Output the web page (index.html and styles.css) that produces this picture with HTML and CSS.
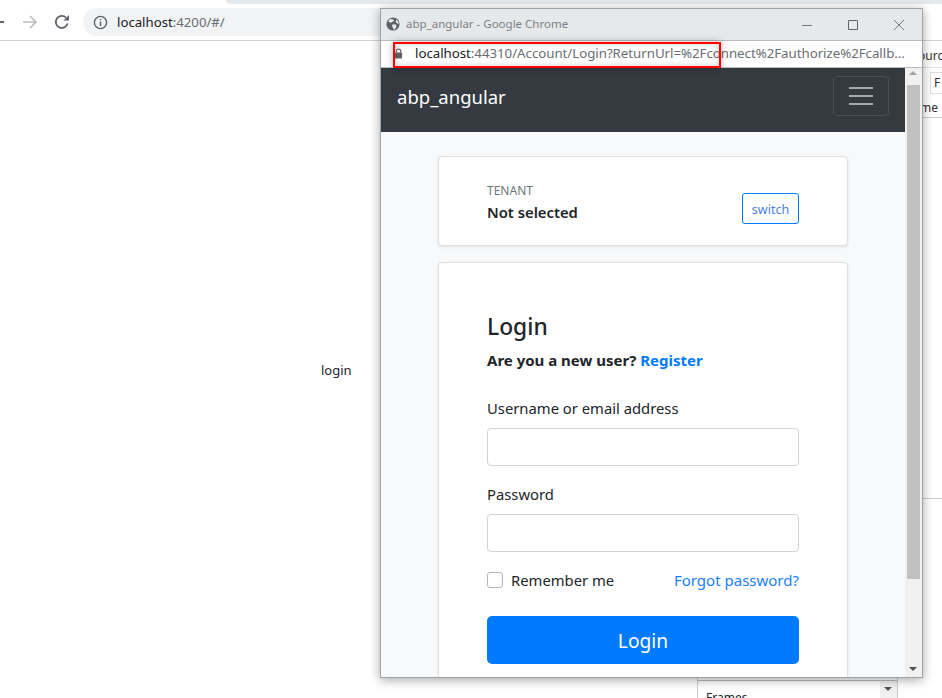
FILE: index.html
```html
<!DOCTYPE html>
<html lang="en">
<head>
<meta charset="utf-8">
<title>abp_angular</title>
<link rel="stylesheet" href="styles.css">
</head>
<body>
<div class="desktop">
  <div class="tabstrip"><div class="tab-edge"></div></div>
  <header class="toolbar">
    <span class="back-stub"></span>
    <svg class="tool-icon forward" viewBox="0 0 16 16" width="16" height="16"><path d="M1 8h13M8 2l6 6-6 6" fill="none" stroke="#bdbdbd" stroke-width="1.7"/></svg>
    <svg class="tool-icon reload" viewBox="0 0 16 16" width="16" height="16"><path d="M13.6 9.5A6 6 0 1 1 12 3.6" fill="none" stroke="#5f6368" stroke-width="1.8"/><path d="M15 1v5.6H9.4z" fill="#5f6368"/></svg>
    <div class="omnibox">
      <svg class="info" viewBox="0 0 16 16" width="15" height="15"><circle cx="8" cy="8" r="6.5" fill="none" stroke="#5f6368" stroke-width="1.5"/><path d="M8 7v4.6M8 4.2v1.5" stroke="#5f6368" stroke-width="1.6"/></svg>
      <span class="host">localhost</span><span class="path">:4200/#/</span>
    </div>
  </header>
  <main class="app-page"><span class="login-link">login</span></main>

  <aside class="devtools">
    <span class="dt-rule-top"></span>
    <span class="dt-source">ource</span>
    <span class="dt-filter">F</span>
    <span class="dt-name">me</span>
    <span class="dt-rule"></span>
  </aside>
  <aside class="frames">
    <span class="frames-label">Frames</span>
    <span class="frames-arrow"></span>
  </aside>

  <section class="popup">
    <div class="popup-title">
      <svg class="globe" viewBox="0 0 16 16" width="14" height="14"><circle cx="8" cy="8" r="7.5" fill="#5f6368"/><path d="M5 2c2 1 4 .5 4 2S7 5 6.500 6 4 6 3 5.500 3.500 2.800 5 2zM8 8.500c2-.8 4 .3 4 1.800s-2 4-3 4-.5-2-1.500-3S6.500 9 8 8.500zM12 3c1.500 1 2.500 3 2.500 5l-2-1-1.500-2z" fill="#e6e9ec"/></svg>
      <span class="popup-name">abp_angular - Google Chrome</span>
      <div class="window-controls">
        <svg viewBox="0 0 12 12" width="12" height="12"><path d="M1 6.500h10" stroke="#777" stroke-width="1"/></svg>
        <svg viewBox="0 0 12 12" width="12" height="12"><path d="M1.500 1.500h9v9h-9z" fill="none" stroke="#666" stroke-width="1"/></svg>
        <svg viewBox="0 0 12 12" width="12" height="12"><path d="M1 1l10 10M11 1L1 11" stroke="#777" stroke-width="1"/></svg>
      </div>
    </div>
    <div class="popup-address">
      <svg class="lock" viewBox="0 0 10 12" width="9" height="11"><path d="M2.500 5V3.500a2.500 2.500 0 0 1 5 0V5" fill="none" stroke="#5f6368" stroke-width="1.300"/><rect x="1" y="5" width="8" height="6.500" rx=".7" fill="#5f6368"/></svg>
      <span class="addr-text"><span class="host">localhost</span><span class="path">:44310/Account/Login?ReturnUrl=%2Fconnect%2Fauthorize%2Fcallb...</span></span>
      <span class="highlight"></span>
    </div>
    <div class="popup-body">
      <div class="viewport">
        <nav class="navbar">
          <span class="brand">abp_angular</span>
          <span class="toggler"><i></i><i></i><i></i></span>
        </nav>
        <div class="content">
          <div class="card tenant-card">
            <div>
              <div class="tenant-label">TENANT</div>
              <div class="tenant-value">Not selected</div>
            </div>
            <a class="switch-btn">switch</a>
          </div>
          <div class="card login-card">
            <h1>Login</h1>
            <p class="new-user"><strong>Are you a new user?</strong> <a>Register</a></p>
            <label class="field-label">Username or email address</label>
            <div class="input"></div>
            <label class="field-label">Password</label>
            <div class="input"></div>
            <div class="form-row">
              <span class="remember"><span class="checkbox"></span>Remember me</span>
              <a class="forgot">Forgot password?</a>
            </div>
            <div class="login-btn">Login</div>
          </div>
        </div>
      </div>
      <div class="scrollbar">
        <span class="arrow up"></span>
        <span class="track"><span class="thumb"></span></span>
        <span class="arrow down"></span>
      </div>
    </div>
  </section>
</div>
</body>
</html>
```
FILE: styles.css
```css
* { box-sizing: border-box; }
html, body { margin: 0; padding: 0; }
body {
  width: 942px;
  height: 698px;
  overflow: hidden;
  background: #fff;
  font-family: "Noto Sans", "Open Sans", sans-serif;
  color: #212529;
}
.desktop { position: relative; width: 942px; height: 698px; overflow: hidden; }

.tabstrip { height: 4px; position: relative; }
.tab-edge { margin-left: 226px; height: 4px; background: #e6e9ec; border-bottom-left-radius: 6px; }

.toolbar {
  height: 37px;
  border-bottom: 1px solid #d4d4d4;
  display: flex;
  align-items: center;
  position: relative;
}
.back-stub { width: 4px; height: 2px; background: #5f6368; margin-right: 18px; }
.tool-icon { display: block; }
.forward { margin-right: 16px; }
.reload { margin-right: 13px; }
.omnibox {
  width: 320px;
  height: 28px;
  border-radius: 14px 0 0 14px;
  background: #f1f3f4;
  display: flex;
  align-items: center;
  padding-left: 10px;
  font-size: 13.2px;
}
.info { margin-right: 9px; }
.host { color: #202124; }
.path { color: #6a6e73; }

.app-page { height: 657px; position: relative; }
.login-link { position: absolute; left: 321px; top: 319px; font-size: 13px; line-height: 20px; }

.devtools {
  position: absolute;
  left: 923px; top: 41px; width: 19px; height: 458px;
  background: #fff;
  border-bottom: 1px solid #ccc;
  font-size: 12px;
  color: #333;
}
.dt-rule-top { position: absolute; left: 0; right: 0; top: 26px; height: 1px; background: #e2e2e2; }
.dt-source { position: absolute; left: -5px; top: 7px; line-height: 16px; }
.dt-filter {
  position: absolute; left: 7px; top: 31px; width: 14px; height: 22px;
  border: 1px solid #ddd; padding-left: 3px; line-height: 20px;
}
.dt-name { position: absolute; left: -3px; top: 59px; line-height: 16px; }
.dt-rule { position: absolute; left: 0; right: 0; top: 76px; height: 1px; background: #ccc; }

.frames {
  position: absolute;
  left: 697px; top: 678px; width: 201px; height: 30px;
  border-left: 1px solid #ccc;
  border-right: 1px solid #ccc;
  font-size: 12px;
}
.frames::before {
  content: "";
  position: absolute; left: 0; right: 0; top: 2px; height: 1px; background: #bbb;
}
.frames-label { position: absolute; left: 8px; top: 12px; line-height: 16px; }
.frames-arrow {
  position: absolute; right: 0; top: 3px; width: 17px; height: 27px; background: #f0f0f0;
}
.frames-arrow::after {
  content: "";
  position: absolute; left: 4px; top: 6px;
  border: 4px solid transparent; border-top: 4px solid #555; border-bottom: 0;
}

.popup {
  position: absolute;
  left: 380px; top: 8px; width: 543px; height: 670px;
  border: 1px solid #9fa3a6;
  background: #fff;
  box-shadow: 0 2px 10px rgba(0,0,0,.35);
  display: flex;
  flex-direction: column;
}
.popup-title {
  height: 31px;
  background: #e6e9ec;
  display: flex;
  align-items: center;
  padding-left: 5px;
  flex: none;
}
.globe { margin-right: 6px; margin-top: -1px; }
.popup-name { font-size: 11.500px; color: #7c7f82; margin-top: -2px; }
.window-controls { margin-left: auto; display: flex; gap: 34px; padding-right: 17px; }
.window-controls svg { display: block; }
.popup-address {
  height: 28px;
  flex: none;
  background: #fff;
  border-top: 1px solid #b9bcbe;
  border-bottom: 1px solid #b9bcbe;
  display: flex;
  align-items: center;
  padding-left: 13px;
  font-size: 13.3px;
  position: relative;
  white-space: nowrap;
}
.lock { margin-right: 12px; flex: none; margin-top: -2px; }
.addr-text { margin-top: -2px; letter-spacing: -.04px; }
.highlight {
  position: absolute;
  left: 12px; top: 1px; width: 328px; height: 26px;
  border: 2px solid #f00;
  box-shadow: 0 0 7px rgba(0,0,0,.3), inset 0 0 6px rgba(0,0,0,.2);
}
.popup-body { flex: 1; display: flex; min-height: 0; }
.viewport { flex: 1; overflow: hidden; background: #f8f9fa; }
.navbar {
  height: 64px;
  background: #343a40;
  display: flex;
  align-items: center;
  justify-content: space-between;
  padding: 0 16px 8px;
}
.brand { color: #fff; font-size: 18.500px; }
.toggler {
  width: 56px; height: 40px;
  border: 1px solid #4a4f55;
  border-radius: 4px;
  display: flex;
  flex-direction: column;
  align-items: center;
  justify-content: center;
  gap: 6px;
}
.toggler i { display: block; width: 24px; height: 2px; background: #a4a6a8; }
.content { padding: 24px 57px 0; }
.card {
  width: 410px;
  background: #fff;
  border: 1px solid #dfdfdf;
  border-radius: 4px;
  box-shadow: 0 1px 3px rgba(0,0,0,.1);
}
.tenant-card {
  height: 90px;
  padding: 25px 48px 0;
  display: flex;
  justify-content: space-between;
  margin-bottom: 16px;
}
.tenant-label { font-size: 12px; line-height: 18px; color: #6c757d; }
.tenant-value { font-size: 14.800px; line-height: 25px; font-weight: 600; }
.switch-btn {
  width: 57px; height: 31px; margin-top: 11px;
  border: 1px solid #007bff;
  border-radius: 3px;
  color: #4a7fe0;
  font-size: 12.500px;
  display: flex;
  align-items: center;
  justify-content: center;
  padding-top: 1px;
}
.login-card { padding: 48px 48px 24px; height: 460px; }
h1 { margin: 0; font-size: 22.800px; font-weight: 500; line-height: 32px; }
.new-user { margin: 6px 0 26px; font-size: 15px; line-height: 22px; }
.new-user strong { font-weight: 700; }
.new-user a { color: #007bff; font-weight: 700; }
.field-label { display: block; font-size: 14.800px; line-height: 22px; margin-bottom: 9px; }
.input {
  height: 38px;
  border: 1px solid #ced4da;
  border-radius: 4px;
  background: #fff;
  margin-bottom: 17px;
}
.form-row { display: flex; justify-content: space-between; align-items: center; height: 24px; margin-top: -1px; font-size: 14.800px; }
.remember { display: flex; align-items: center; }
.checkbox {
  width: 16px; height: 16px;
  border: 1px solid #adb5bd;
  border-radius: 3px;
  margin-right: 8px;
}
.forgot { color: #1a7fff; font-size: 15px; }
.login-btn {
  height: 48px;
  margin-top: 24px;
  background: #007bff;
  border-radius: 5px;
  color: #fff;
  font-size: 19.200px;
  display: flex;
  align-items: center;
  justify-content: center;
}
.scrollbar {
  width: 17px;
  flex: none;
  background: #f1f1f1;
  display: flex;
  flex-direction: column;
  align-items: center;
}
.track { flex: 1; width: 100%; display: block; }
.thumb { display: block; height: 494px; margin: 0 2px; width: 13px; background: #c1c1c1; }
.arrow { width: 17px; height: 17px; position: relative; flex: none; }
.arrow::after { content: ""; position: absolute; left: 4px; border: 4px solid transparent; }
.arrow.up::after { top: 3px; border-top: 0; border-bottom: 4px solid #a3a3a3; }
.arrow.down::after { top: 7px; border-bottom: 0; border-top: 4px solid #505050; }
```
